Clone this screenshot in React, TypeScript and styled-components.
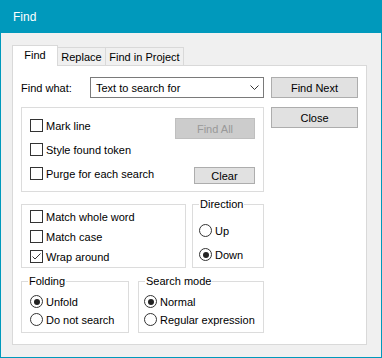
import styled, { createGlobalStyle } from "styled-components";

const GlobalStyle = createGlobalStyle`
  html, body {
    margin: 0;
    padding: 0;
    background: #f0f0f0;
  }
  body {
    font-family: "Liberation Sans", Arial, sans-serif;
    font-size: 11px;
    color: #000;
  }
  * {
    box-sizing: border-box;
  }
`;

const Window = styled.div`
  width: 382px;
  height: 358px;
  border: 1px solid #0099bc;
  border-top: none;
  background: #f0f0f0;
  display: flex;
  flex-direction: column;
`;

const TitleBar = styled.div`
  height: 33px;
  margin: 0 -1px;
  padding-left: 13px;
  background: #0099bc;
  color: #fff;
  display: flex;
  align-items: center;
  font-size: 12px;
`;

const Content = styled.div`
  padding: 12px 0 0 11px;
`;

const TabBar = styled.div`
  display: flex;
  align-items: flex-end;
  height: 21px;
  margin-bottom: -1px;
  position: relative;
  z-index: 1;
`;

const Tab = styled.div<{ $active?: boolean; $w: number }>`
  width: ${(p) => p.$w}px;
  height: ${(p) => (p.$active ? 21 : 19)}px;
  border: 1px solid #d9d9d9;
  border-bottom: ${(p) => (p.$active ? "none" : "1px solid #d9d9d9")};
  background: ${(p) => (p.$active ? "#fff" : "#f0f0f0")};
  display: flex;
  align-items: center;
  justify-content: center;
  padding-bottom: ${(p) => (p.$active ? 2 : 0)}px;
  & + & {
    margin-left: -1px;
  }
`;

const Panel = styled.div`
  width: 355px;
  height: 280px;
  border: 1px solid #d9d9d9;
  background: #fff;
  padding: 11px 0 0 8px;
  display: flex;
  gap: 7px;
`;

const LeftColumn = styled.div`
  width: 243px;
  display: flex;
  flex-direction: column;
`;

const RightColumn = styled.div`
  width: 87px;
  display: flex;
  flex-direction: column;
  gap: 9px;
`;

const FindRow = styled.div`
  display: flex;
  align-items: center;
  height: 21px;
`;

const FieldLabel = styled.span`
  width: 69px;
`;

const Combo = styled.div`
  flex: 1;
  height: 21px;
  border: 1px solid #7a7a7a;
  background: #fff;
  display: flex;
  align-items: center;
  justify-content: space-between;
  padding: 0 4px 0 5px;
`;

const Button = styled.div<{ $w?: number; $h?: number; $disabled?: boolean }>`
  width: ${(p) => (p.$w ? `${p.$w}px` : "100%")};
  height: ${(p) => p.$h ?? 21}px;
  border: 1px solid ${(p) => (p.$disabled ? "#bfbfbf" : "#adadad")};
  background: ${(p) => (p.$disabled ? "#cccccc" : "#e1e1e1")};
  color: ${(p) => (p.$disabled ? "#999" : "#000")};
  display: flex;
  align-items: center;
  justify-content: center;
`;

const GroupBox = styled.div<{ $w: number; $h: number; $pad: string }>`
  position: relative;
  width: ${(p) => p.$w}px;
  height: ${(p) => p.$h}px;
  border: 1px solid #dcdcdc;
  padding: ${(p) => p.$pad};
`;

const Legend = styled.span`
  position: absolute;
  top: -8px;
  left: 6px;
  padding: 0 1px;
  line-height: 14px;
  background: #fff;
`;

const OptionsGroup = styled(GroupBox)`
  margin-top: 9px;
  display: flex;
  justify-content: space-between;
`;

const GroupRow = styled.div<{ $gap: number; $top: number }>`
  display: flex;
  gap: ${(p) => p.$gap}px;
  margin-top: ${(p) => p.$top}px;
`;

const OptionList = styled.div<{ $gap: number; $top?: number }>`
  display: flex;
  flex-direction: column;
  gap: ${(p) => p.$gap}px;
  padding-top: ${(p) => p.$top ?? 0}px;
`;

const SideButtons = styled.div`
  display: flex;
  flex-direction: column;
  align-items: flex-end;
  gap: 28px;
`;

const Option = styled.label`
  display: flex;
  align-items: center;
  height: 13px;
  gap: 3px;
  white-space: nowrap;
`;

const Box = styled.span`
  width: 13px;
  height: 13px;
  border: 1px solid #333;
  background: #fff;
  display: flex;
  flex-shrink: 0;
`;

const Round = styled.span<{ $on?: boolean }>`
  width: 13px;
  height: 13px;
  border: 1px solid #333;
  border-radius: 50%;
  background: #fff;
  display: flex;
  align-items: center;
  justify-content: center;
  flex-shrink: 0;
  &::after {
    content: "";
    width: 6px;
    height: 6px;
    border-radius: 50%;
    background: ${(p) => (p.$on ? "#222" : "transparent")};
  }
`;

function Check({ label, on }: { label: string; on?: boolean }) {
  return (
    <Option>
      <Box>
        {on && (
          <svg width="11" height="11" viewBox="0 0 11 11">
            <polyline points="1.5,5.5 4,8 9.5,2.5" fill="none" stroke="#333" strokeWidth="1" />
          </svg>
        )}
      </Box>
      {label}
    </Option>
  );
}

function Radio({ label, on }: { label: string; on?: boolean }) {
  return (
    <Option>
      <Round $on={on} />
      {label}
    </Option>
  );
}

export default function App() {
  return (
    <>
      <GlobalStyle />
      <Window>
        <TitleBar>Find</TitleBar>
        <Content>
          <TabBar>
            <Tab $active $w={46}>Find</Tab>
            <Tab $w={49}>Replace</Tab>
            <Tab $w={79}>Find in Project</Tab>
          </TabBar>
          <Panel>
            <LeftColumn>
              <FindRow>
                <FieldLabel>Find what:</FieldLabel>
                <Combo>
                  <span>Text to search for</span>
                  <svg width="9" height="5" viewBox="0 0 9 5">
                    <polyline points="0.5,0.5 4.5,4.5 8.5,0.5" fill="none" stroke="#333" strokeWidth="1" />
                  </svg>
                </Combo>
              </FindRow>

              <OptionsGroup $w={243} $h={85} $pad="10px 8px 0 8px">
                <OptionList $gap={11} $top={1}>
                  <Check label="Mark line" />
                  <Check label="Style found token" />
                  <Check label="Purge for each search" />
                </OptionList>
                <SideButtons>
                  <Button $w={80} $disabled>Find All</Button>
                  <Button $w={61} $h={17}>Clear</Button>
                </SideButtons>
              </OptionsGroup>

              <GroupRow $gap={6} $top={12}>
                <GroupBox $w={165} $h={64} $pad="5px 8px 0">
                  <OptionList $gap={7}>
                    <Check label="Match whole word" />
                    <Check label="Match case" />
                    <Check label="Wrap around" on />
                  </OptionList>
                </GroupBox>
                <GroupBox $w={72} $h={64} $pad="19px 6px 0">
                  <Legend>Direction</Legend>
                  <OptionList $gap={11}>
                    <Radio label="Up" />
                    <Radio label="Down" on />
                  </OptionList>
                </GroupBox>
              </GroupRow>

              <GroupRow $gap={9} $top={13}>
                <GroupBox $w={108} $h={52} $pad="13px 8px 0">
                  <Legend>Folding</Legend>
                  <OptionList $gap={5}>
                    <Radio label="Unfold" on />
                    <Radio label="Do not search" />
                  </OptionList>
                </GroupBox>
                <GroupBox $w={126} $h={52} $pad="13px 5px 0">
                  <Legend>Search mode</Legend>
                  <OptionList $gap={5}>
                    <Radio label="Normal" on />
                    <Radio label="Regular expression" />
                  </OptionList>
                </GroupBox>
              </GroupRow>
            </LeftColumn>
            <RightColumn>
              <Button>Find Next</Button>
              <Button>Close</Button>
            </RightColumn>
          </Panel>
        </Content>
      </Window>
    </>
  );
}
